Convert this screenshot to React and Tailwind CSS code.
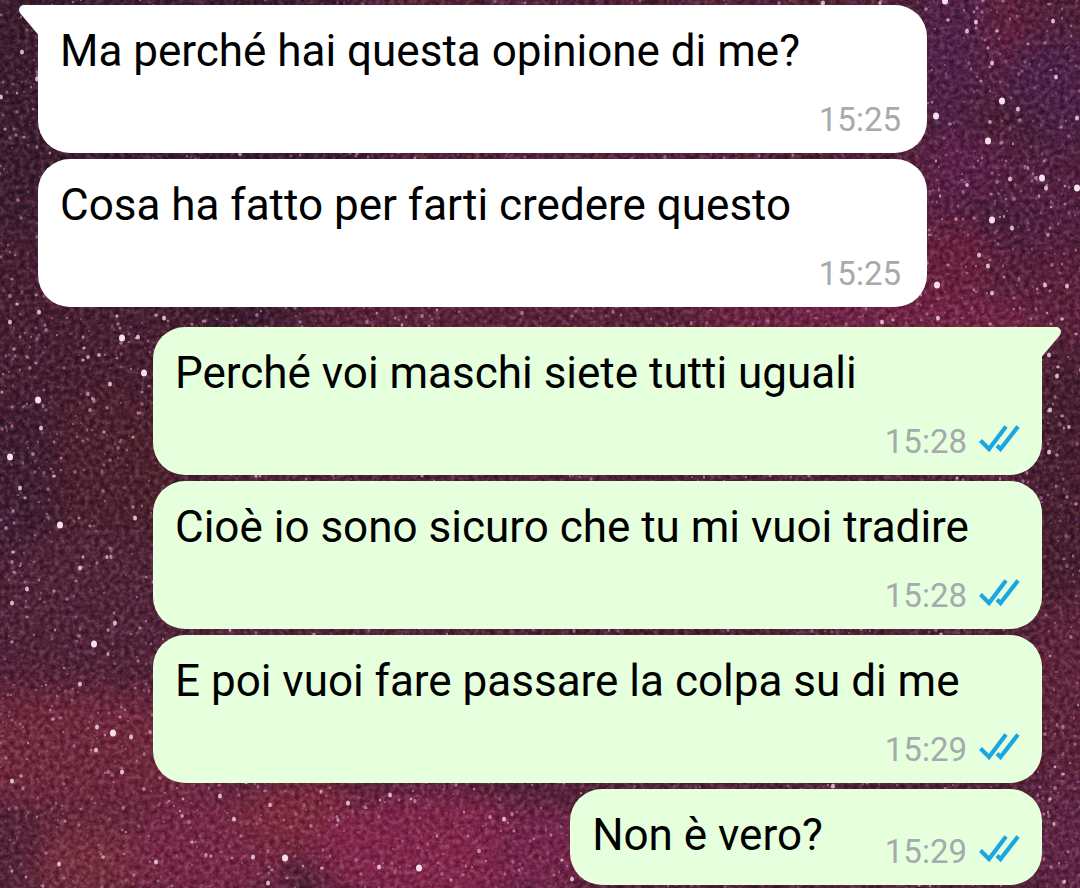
import clsx from 'clsx';

const MESSAGES = [
  { id: 1, text: 'Ma perché hai questa opinione di me?', time: '15:25', tail: true },
  { id: 2, text: 'Cosa ha fatto per farti credere questo', time: '15:25' },
  { id: 3, text: 'Perché voi maschi siete tutti uguali', time: '15:28', mine: true, tail: true },
  { id: 4, text: 'Cioè io sono sicuro che tu mi vuoi tradire', time: '15:28', mine: true },
  { id: 5, text: 'E poi vuoi fare passare la colpa su di me', time: '15:29', mine: true },
  { id: 6, text: 'Non è vero?', time: '15:29', mine: true, short: true },
];

// nebula patches: x, y, rx, ry, colour
const CLOUDS = [
  [120, 120, 260, 260, '#3a1d2f'],
  [60, 420, 160, 200, '#451f32'],
  [110, 480, 70, 90, '#4b212e'],
  [20, 480, 40, 80, '#3e1e33'],
  [100, 600, 120, 70, '#4f2439'],
  [70, 750, 160, 60, '#6e293e'],
  [100, 860, 110, 40, '#742f40'],
  [15, 850, 25, 40, '#502338'],
  [210, 850, 80, 60, '#742846'],
  [300, 815, 60, 40, '#7a2b3e'],
  [430, 850, 120, 60, '#80274c'],
  [540, 850, 50, 50, '#74264c'],
  [990, 40, 50, 50, '#60203c'],
  [950, 50, 40, 90, '#4e2249'],
  [1050, 90, 50, 60, '#4b2249'],
  [1000, 135, 40, 30, '#462031'],
  [970, 180, 60, 50, '#5a2149'],
  [1040, 210, 60, 60, '#502040'],
  [980, 225, 40, 20, '#40203b'],
  [950, 260, 50, 40, '#67213d'],
  [900, 318, 240, 20, '#752549'],
  [1060, 290, 40, 40, '#59213b'],
  [500, 317, 200, 14, '#5f243b'],
  [1065, 480, 40, 130, '#451f31'],
  [1065, 700, 40, 100, '#5d243c'],
  [1065, 840, 40, 60, '#5e2645'],
];

// bright stars: x, y, r
const BRIGHT = [
  [22, 52, 2], [1, 97, 2], [17, 93, 1], [37, 79, 2],
  [10, 322, 2], [39, 312, 2], [122, 338, 3], [138, 337, 2], [144, 373, 3], [110, 384, 2],
  [38, 400, 3], [41, 428, 2], [10, 457, 3], [20, 488, 2], [60, 525, 3], [135, 518, 2], [164, 318, 2],
  [80, 568, 2], [27, 589, 2], [12, 603, 2], [115, 623, 2], [94, 644, 3], [55, 630, 1],
  [80, 684, 2], [113, 733, 3], [97, 727, 2], [131, 737, 2], [96, 750, 2], [122, 772, 2],
  [28, 743, 1], [12, 781, 2], [234, 819, 2], [348, 803, 2], [220, 796, 2], [285, 858, 3],
  [253, 857, 2], [379, 867, 2], [419, 868, 3], [504, 819, 2], [59, 864, 2], [156, 862, 2],
  [268, 883, 2], [303, 866, 1], [390, 795, 2], [464, 812, 1],
  [945, 1, 3], [823, 3, 2], [967, 31, 2], [1053, 21, 2], [976, 22, 2], [992, 63, 2],
  [1002, 101, 3], [1018, 109, 2], [988, 141, 3], [936, 116, 3], [1077, 118, 2], [1056, 77, 2],
  [1010, 179, 2], [1042, 178, 3], [1046, 188, 2], [1077, 188, 3], [992, 220, 3], [1012, 228, 2],
  [979, 255, 2], [988, 266, 2], [937, 285, 3], [1067, 286, 2], [992, 293, 2], [1045, 285, 2],
  [882, 322, 2], [938, 318, 2], [1049, 355, 2], [1057, 376, 2], [1050, 410, 2], [1064, 428, 1],
  [1049, 452, 2], [1021, 777, 2], [1048, 812, 1], [833, 786, 2], [573, 821, 2], [572, 879, 2],
];

const STAR_OPACITY = { 1: 0.6, 2: 0.8, 3: 1 };

function seeded(seed) {
  let s = seed;
  return () => {
    s = (s * 16807) % 2147483647;
    return s / 2147483647;
  };
}

const DUST_COLORS = ['#d58fb0', '#c0789f', '#edc0d6', '#c08fa8', '#a67cb0'];

function scatter(count, seed, minR, minOpacity) {
  const rand = seeded(seed);
  return Array.from({ length: count }, () => ({
    x: Math.round(rand() * 1080),
    y: Math.round(rand() * 888),
    rx: minR + rand() * 0.6,
    ry: minR + rand() * 0.8,
    o: minOpacity + rand() * 0.35,
    fill: DUST_COLORS[Math.floor(rand() * DUST_COLORS.length)],
  }));
}

const DUST = [
  ...scatter(3500, 4711, 0.7, 0.1),
  ...scatter(2200, 1999, 1, 0.35),
  ...scatter(1100, 86243, 1.4, 0.5),
];

function Wallpaper() {
  return (
    <svg
      aria-hidden="true"
      viewBox="0 0 1080 888"
      preserveAspectRatio="xMidYMid slice"
      className="absolute inset-0 h-full w-full"
    >
      <defs>
        <filter id="cloud-blur" x="-50%" y="-50%" width="200%" height="200%" colorInterpolationFilters="sRGB">
          <feGaussianBlur stdDeviation="15" />
        </filter>
        <filter id="star-blur" colorInterpolationFilters="sRGB">
          <feGaussianBlur stdDeviation="0.6" />
        </filter>
        <filter id="grain" x="0" y="0" width="100%" height="100%" colorInterpolationFilters="sRGB">
          <feTurbulence type="fractalNoise" baseFrequency="0.2" numOctaves="3" seed="8" />
          <feColorMatrix values="1.6 0.3 0 0 -0.42  1.6 0 0.3 0 -0.46  1.6 0 0 0.3 -0.46  0 0 0 0 1" />
        </filter>
      </defs>
      <rect width="1080" height="888" fill="#4f2238" />
      <g filter="url(#cloud-blur)">
        {CLOUDS.map(([x, y, rx, ry, fill]) => (
          <ellipse key={`${x}-${y}`} cx={x} cy={y} rx={rx} ry={ry} fill={fill} />
        ))}
      </g>
      <rect width="1080" height="888" filter="url(#grain)" className="opacity-50 mix-blend-soft-light" />
      <g filter="url(#star-blur)">
        {DUST.map((d, i) => (
          <ellipse key={i} cx={d.x} cy={d.y} rx={d.rx} ry={d.ry} fill={d.fill} opacity={d.o} />
        ))}
        {BRIGHT.map(([x, y, r]) => (
          <ellipse key={`${x}-${y}`} cx={x} cy={y} rx={r} ry={r + 0.5} fill="#f6dfec" opacity={STAR_OPACITY[r]} />
        ))}
      </g>
    </svg>
  );
}

function Tail({ mine }) {
  return (
    <svg
      aria-hidden="true"
      viewBox="0 0 20 30"
      className={clsx(
        'absolute top-0 h-[30px] w-[20px]',
        mine ? '-right-[19px] -scale-x-100 text-[#e6ffdc]' : '-left-[19px] text-white',
      )}
    >
      <path d="M20 0H5C0.6 0 -1.4 5 1.4 8.6L19 29.5H20Z" fill="currentColor" />
    </svg>
  );
}

function ReadTicks() {
  return (
    <svg
      role="img"
      aria-label="Letto"
      viewBox="0 0 41 27"
      className="mb-[10px] h-[27px] w-[41px]"
      fill="none"
      stroke="#1aa6e2"
      strokeWidth="4.2"
    >
      <path d="M1.5 15.5L10 24L27 1.5" />
      <path d="M18 20.5L21.5 24L39 1.5" />
    </svg>
  );
}

function Message({ text, time, mine, tail, short }) {
  return (
    <li
      className={clsx(
        'relative flex rounded-[32px] pt-[20px] pb-[13px] pl-[22px]',
        mine ? 'bg-[#e6ffdc] pr-[22px]' : 'mr-[115px] bg-white pr-[26px]',
        mine && !short && 'ml-[115px]',
        short ? 'w-fit items-end gap-[62px] self-end' : 'flex-col gap-[23px]',
        tail && (mine ? 'mt-[14px] rounded-tr-none' : 'rounded-tl-none'),
      )}
    >
      {tail && <Tail mine={mine} />}
      <p className={clsx('text-[44px] leading-[52px] text-black', short && 'mb-[11px]')}>{text}</p>
      <div className="flex items-end justify-end gap-[12px]">
        <time className="text-[33px] leading-[40px] text-[#a4aaad]">{time}</time>
        {mine && <ReadTicks />}
      </div>
    </li>
  );
}

export default function App() {
  return (
    <main className="relative min-h-screen overflow-hidden bg-[#4f2238] font-['Roboto',sans-serif]">
      <Wallpaper />
      <ol className="relative flex flex-col gap-[6px] px-[38px] pt-[5px]">
        {MESSAGES.map((m) => (
          <Message key={m.id} {...m} />
        ))}
      </ol>
    </main>
  );
}
